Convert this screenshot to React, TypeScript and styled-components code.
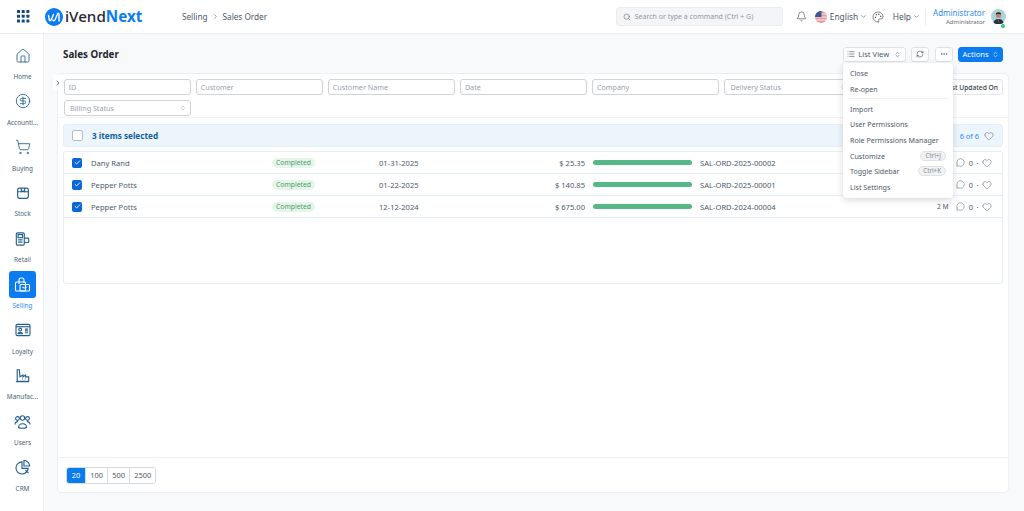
import React from "react";
import styled, { createGlobalStyle } from "styled-components";
import { Bell, ChevronDown, ChevronRight, ChevronsUpDown, Check, Heart, Home, List, MessageCircle, MoreHorizontal, RefreshCw, Search, ShoppingCart, CircleDollarSign, Palette } from "lucide-react";

const Global = createGlobalStyle`
  html, body { margin: 0; padding: 0; background: #f8f9fb; }
  body { font-family: "Noto Sans", "Open Sans", sans-serif; color: #4c5a67; overflow: hidden; }
  #root { width: 1024px; height: 511px; }
  * { box-sizing: border-box; }
`;
const Page = styled.div`width:1024px;height:511px;display:flex;flex-direction:column;position:relative;overflow:hidden;`;
const TopBar = styled.header`height:34px;flex:none;background:#fff;border-bottom:1px solid #e9edf1;display:flex;align-items:center;padding:0 18px 0 17px;`;
const BrandBlock = styled.div`display:flex;align-items:center;gap:15px;width:165px;`;
const Wordmark = styled.div`display:flex;align-items:center;gap:2px;font:500 15.2px "Noto Sans",sans-serif;color:#1f272e;line-height:1;`;
const Blue = styled.span`color:#0b7cf0;font-weight:700;`;
const Crumbs = styled.div`display:flex;align-items:center;gap:4px;font-size:8.2px;color:#4c5a67;white-space:nowrap;`;
const Spacer = styled.div`flex:1;`;
const SearchBox = styled.div`width:167px;height:19px;background:#f4f5f6;border:1px solid #e9edf1;border-radius:3px;display:flex;align-items:center;gap:4px;padding:0 6px;font-size:7px;color:#8d99a6;margin-right:13px;white-space:nowrap;`;
const NavTools = styled.div`display:flex;align-items:center;font-size:8.4px;color:#4c5a67;`;
const ToolGap = styled.div<{ $w: number }>`width:${p => p.$w}px;`;
const Flag = styled.svg`width:12px;height:12px;border-radius:50%;display:block;margin-right:3px;`;
const UserBlock = styled.div`border-left:1px solid #e9edf1;height:16px;margin-left:5px;padding-left:7px;display:flex;align-items:center;gap:6px;`;
const UserText = styled.div`display:flex;flex-direction:column;align-items:flex-end;line-height:1;`;
const UserName = styled.div`font-size:8px;color:#2f8cf0;`;
const UserRole = styled.div`font-size:6px;color:#5f6b76;margin-top:2px;`;
const Avatar = styled.div`position:relative;width:15px;height:15px;`;
const Online = styled.div`position:absolute;right:1px;bottom:-4px;width:4px;height:4px;background:#2ecc71;border-radius:50%;`;
const Body = styled.div`flex:1;display:flex;min-height:0;`;
const Sidebar = styled.nav`width:44px;flex:none;background:#fff;border-right:1px solid #eef0f3;padding:8px 0 0 2px;display:flex;flex-direction:column;`;
const SideItem = styled.div`height:45.75px;display:flex;flex-direction:column;align-items:center;color:#2f5f8a;`;
const IconTile = styled.div<{ $active?: boolean }>`width:27px;height:27px;border-radius:3px;display:flex;align-items:center;justify-content:center;background:${p => p.$active ? "#0b7cf0" : "transparent"};color:${p => p.$active ? "#fff" : "#24608f"};`;
const SideLabel = styled.div<{ $active?: boolean }>`font-size:6.4px;line-height:8px;margin-top:4px;color:${p => p.$active ? "#2f8cf0" : "#4a5f73"};white-space:nowrap;`;
const Main = styled.main`flex:1;padding:0 15px 18px 13px;display:flex;flex-direction:column;min-width:0;`;
const PageHead = styled.div`height:39px;flex:none;display:flex;align-items:center;padding:1px 6px 0 6px;gap:5.5px;`;
const Title = styled.h1`margin:0;font-size:9.8px;font-weight:700;color:#1f272e;flex:1;`;
const HeadButton = styled.div<{ $w: number; $primary?: boolean }>`width:${p => p.$w}px;height:15px;border-radius:3px;display:flex;align-items:center;justify-content:center;gap:3px;font-size:7.6px;white-space:nowrap;background:${p => p.$primary ? "#0b7cf0" : "#fff"};color:${p => p.$primary ? "#fff" : "#4c5a67"};border:1px solid ${p => p.$primary ? "#0b7cf0" : "#dfe3e8"};`;
const Card = styled.section`flex:1;position:relative;background:#fff;border:1px solid #eceff3;border-radius:5px;display:flex;flex-direction:column;min-height:0;`;
const CollapseTab = styled.div`position:absolute;left:-5px;top:1px;width:9px;height:15px;background:#fff;display:flex;align-items:center;justify-content:center;color:#333c44;`;
const FilterArea = styled.div`display:flex;justify-content:space-between;padding:5px 5px 2px 5.6px;border-bottom:1px solid #f0f2f4;height:44px;flex:none;`;
const FilterGrid = styled.div`width:795px;display:flex;flex-wrap:wrap;gap:5px 5.1px;align-content:flex-start;`;
const Field = styled.div<{ $select?: boolean }>`width:127px;height:16px;border:1px solid #cfd3d7;border-radius:3px;background:#fff;font-size:7.2px;color:#98a2ad;display:flex;align-items:center;justify-content:space-between;padding:0 4px 0 ${p => p.$select ? 5.5 : 4}px;white-space:nowrap;`;
const SortButton = styled.div`width:147px;height:16px;border:1px solid #e2e6e9;border-radius:3px;font-size:6.7px;font-weight:500;color:#333c44;display:flex;align-items:center;justify-content:flex-end;padding-right:4px;`;
const Content = styled.div`flex:1;padding:6px 5px 0 5px;min-height:0;`;
const SelectBar = styled.div`height:23px;background:#ecf4fc;border:1px solid #e6f0fa;border-radius:3px;display:flex;align-items:center;padding:0 8px;font-size:8.2px;`;
const SelectedText = styled.div`flex:1;font-weight:700;color:#105f9f;margin-left:9px;`;
const Count = styled.div`color:#2f8cf0;font-size:7.4px;margin-right:5px;`;
const EmptyBox = styled.div`width:11px;height:11px;border:1px solid #b6bcc3;border-radius:2px;background:#fff;`;
const CheckBox = styled.div`width:10px;height:10px;border-radius:2px;background:#0b66d8;display:flex;align-items:center;justify-content:center;color:#fff;`;
const Rows = styled.div`height:133px;margin-top:4px;border:1px solid #e4eef9;border-radius:3px;background:#fff;`;
const Row = styled.div`height:22px;padding:0 0 0 8px;border-bottom:1px solid #e4eef9;display:grid;grid-template-columns:19px 181px 107px 104px 217px 1fr auto;align-items:center;font-size:7.6px;color:#4c5a67;white-space:nowrap;`;
const Status = styled.div`justify-self:start;height:10px;padding:0 4px;border-radius:5px;background:#e5f5ea;color:#4f9b6c;font-size:6.8px;line-height:10px;`;
const Amount = styled.div`text-align:right;width:102px;`;
const Progress = styled.div`width:99px;height:5px;border-radius:3px;background:#56b886;margin-left:8px;`;
const OrderCell = styled.div`display:flex;align-items:center;`;
const RowEnd = styled.div`display:flex;align-items:center;gap:3.5px;padding-right:10px;font-size:7.4px;`;
const Age = styled.span`font-size:6.8px;margin-right:4px;`;
const Footer = styled.div`height:35px;flex:none;border-top:1px solid #eceff3;display:flex;align-items:center;padding:0 8px;`;
const PageGroup = styled.div`display:flex;height:17px;border:1px solid #d8dcdf;border-radius:3px;overflow:hidden;`;
const PageBtn = styled.div<{ $on?: boolean }>`min-width:18px;padding:0 4.2px;font-size:7.4px;display:flex;align-items:center;justify-content:center;background:${p => p.$on ? "#0b7cf0" : "#fff"};color:${p => p.$on ? "#fff" : "#4c5a67"};border-left:${p => p.$on ? "0" : "1px solid #d8dcdf"};`;
const Menu = styled.div`position:absolute;left:843px;top:63px;width:110px;height:135px;background:#fff;border-radius:4px;box-shadow:0 2px 7px rgba(25,39,52,.18);padding:2px 5px;font-size:7.1px;color:#4c5a67;z-index:3;`;
const MenuItem = styled.div`height:15.7px;display:flex;align-items:center;justify-content:space-between;padding:0 2px;white-space:nowrap;`;
const MenuRule = styled.div`height:1.5px;background:#eef0f2;margin:1.3px 0 1.5px;`;
const Kbd = styled.span`height:10px;padding:0 4px;border-radius:5px;border:1px solid #dfe2e5;background:#f1f2f4;font-size:6.2px;line-height:8px;color:#7b8793;`;

const Apps = () => (<svg width="13" height="13" viewBox="0 0 13 13" fill="#15487e">{[0,1,2].flatMap(r=>[0,1,2].map(c=><rect key={`${r}${c}`} x={c*4.7} y={r*4.7} width="3" height="3" rx=".5"/>))}</svg>);
const Logo = () => (<svg width="18" height="18" viewBox="0 0 18 18"><circle cx="9" cy="9" r="9" fill="#0b7cf0"/><path d="M3.5 7.5c.3 2 .5 3.5 1 5 .8.4 1.5-.2 2-1.500l2-4.500M8 12c.2 1 1.500 1 2 0l2.500-6c.4-1 1.500-1 1.500.5V13" fill="none" stroke="#fff" strokeWidth="1.400" strokeLinecap="round" strokeLinejoin="round"/></svg>);
const Retail = () => (<svg width="15" height="16" viewBox="0 0 17 17" fill="none" stroke="currentColor" strokeWidth="1.300"><rect x="1.500" y="1.500" width="9" height="14" rx="1.300"/><rect x="3.500" y="3.500" width="5" height="3.500"/><path d="M3.500 9.500h5M3.500 12h5M10.500 7.500h4a1 1 0 0 1 1 1v3a1 1 0 0 1-1 1h-4"/></svg>);
const Selling = () => (<svg width="17" height="17" viewBox="0 0 17 17" fill="none" stroke="currentColor" strokeWidth="1.100"><path d="M5 8V4a2 2 0 0 1 2-2h1a2 2 0 0 1 2 2v3"/><rect x="1.500" y="6" width="10" height="9" rx="1"/><rect x="6" y="8.500" width="9.500" height="6.500" rx="1"/><path d="M8.500 11c1 1.400 3 1.400 4 0"/></svg>);
const Box = () => (<svg width="14" height="14" viewBox="0 0 17 17" fill="none" stroke="currentColor" strokeWidth="1.400"><rect x="2" y="2.500" width="13" height="12.500" rx="2.500"/><path d="M2 7h13M6.500 2.500V7l2-1 2 1V2.500"/></svg>);
const Loyalty = () => (<svg width="16" height="14" viewBox="0 0 17 15" fill="none" stroke="currentColor" strokeWidth="1.200"><rect x="1" y="1.500" width="15" height="12" rx="1.500"/><path d="M1 4h15"/><circle cx="5.500" cy="7" r="1.500"/><path d="M3 11.500c.3-2 4.700-2 5 0zM10.500 6.500h3.500M10.500 8.500h3.500M10.500 10.500h3.500"/></svg>);
const Factory = () => (<svg width="15" height="15" viewBox="0 0 17 17" fill="none" stroke="currentColor" strokeWidth="1.300"><path d="M2.500 15V2h2.500l.5 8 3.500-2v2l3-2v2h3.500v5zM1 15.500h15"/><path d="M8 12.500h1M11 12.500h1"/></svg>);
const Crm = () => (<svg width="16" height="16" viewBox="0 0 17 17" fill="none" stroke="currentColor" strokeWidth="1.200"><path d="M7.500 3a6.500 6.500 0 1 0 6.500 7H7.500z"/><path d="M9.500 1.500a6 6 0 0 1 6 6h-6z"/><path d="M11 12l3.500 3"/></svg>);
const Team = () => (<svg width="17" height="14" viewBox="0 0 17 14" fill="none" stroke="currentColor" strokeWidth="1.100"><circle cx="3.500" cy="3.500" r="1.900"/><circle cx="8.500" cy="3" r="2.200"/><circle cx="13.500" cy="3.500" r="1.900"/><path d="M1 9.500c0-2 1.500-3 3-2.800M16 9.500c0-2-1.500-3-3-2.800M4.500 12.500c0-5 8-5 8 0-1.500 1-6.500 1-8 0z"/></svg>);
const Portrait = () => (<svg width="15" height="15" viewBox="0 0 15 15"><circle cx="7.500" cy="7.500" r="7.500" fill="#a9d3d8"/><path d="M2.500 13.500c.7-3 3-3.600 5-3.600s4.300.6 5 3.600a7.500 7.500 0 0 1-10 0z" fill="#1d3448"/><path d="M7 10h1l.4 3.500h-1.800z" fill="#b22b3a"/><circle cx="7.500" cy="6.200" r="2.600" fill="#b9866a"/><path d="M4.800 5.500c0-3 5.400-3 5.400 0-1.500-1-3.900-1-5.400 0z" fill="#1d1a18"/></svg>);
const UsFlag = () => (<Flag viewBox="0 0 12 12"><rect width="12" height="12" fill="#e79aa0"/><path d="M0 3h12M0 6h12M0 9h12" stroke="#f7e8e9"/><rect width="6.500" height="6" fill="#3a5a96"/></Flag>);

const navItems: [string, React.ReactNode, boolean?][] = [
  ["Home", <Home size={16} strokeWidth={1.3}/>],
  ["Accounti...", <CircleDollarSign size={16} strokeWidth={1.3}/>],
  ["Buying", <ShoppingCart size={16} strokeWidth={1.3}/>],
  ["Stock", <Box/>],
  ["Retail", <Retail/>],
  ["Selling", <Selling/>, true],
  ["Loyalty", <Loyalty/>],
  ["Manufac...", <Factory/>],
  ["Users", <Team/>],
  ["CRM", <Crm/>],
];
const rows = [
  { name: "Dany Rand", date: "01-31-2025", amt: "$ 25.35", id: "SAL-ORD-2025-00002", age: "" },
  { name: "Pepper Potts", date: "01-22-2025", amt: "$ 140.85", id: "SAL-ORD-2025-00001", age: "" },
  { name: "Pepper Potts", date: "12-12-2024", amt: "$ 675.00", id: "SAL-ORD-2024-00004", age: "2 M" },
];
const filters = ["ID", "Customer", "Customer Name", "Date", "Company"];

export default function App() {
  return (
    <Page>
      <Global />
      <TopBar>
        <BrandBlock>
          <Apps />
          <Wordmark><Logo /><span>iVend<Blue>Next</Blue></span></Wordmark>
        </BrandBlock>
        <Crumbs><span>Selling</span><ChevronRight size={7} /><span>Sales Order</span></Crumbs>
        <Spacer />
        <SearchBox><Search size={8} color="#6b7680" /><span>Search or type a command (Ctrl + G)</span></SearchBox>
        <NavTools>
          <Bell size={11} color="#333c44" strokeWidth={1.3} />
          <ToolGap $w={8} />
          <UsFlag /><span>English</span><ChevronDown size={7} style={{ marginLeft: 2 }} />
          <ToolGap $w={4.5} />
          <Palette size={12} color="#333c44" strokeWidth={1.2} />
          <ToolGap $w={9} />
          <span>Help</span><ChevronDown size={7} style={{ marginLeft: 2 }} />
          <UserBlock>
            <UserText><UserName>Administrator</UserName><UserRole>Administrator</UserRole></UserText>
            <Avatar><Portrait /><Online /></Avatar>
          </UserBlock>
        </NavTools>
      </TopBar>
      <Body>
        <Sidebar>
          {navItems.map(([label, icon, active]) => (
            <SideItem key={label}>
              <IconTile $active={active}>{icon}</IconTile>
              <SideLabel $active={active}>{label}</SideLabel>
            </SideItem>
          ))}
        </Sidebar>
        <Main>
          <PageHead>
            <Title>Sales Order</Title>
            <HeadButton $w={62.5}><List size={8} /><span>List View</span><ChevronsUpDown size={7} style={{ marginLeft: 2 }} /></HeadButton>
            <HeadButton $w={18}><RefreshCw size={8} /></HeadButton>
            <HeadButton $w={18}><MoreHorizontal size={8} /></HeadButton>
            <HeadButton $w={45} $primary><span>Actions</span><ChevronsUpDown size={7} /></HeadButton>
          </PageHead>
          <Card>
            <CollapseTab><ChevronRight size={8} strokeWidth={2} /></CollapseTab>
            <FilterArea>
              <FilterGrid>
                {filters.map(f => <Field key={f}>{f}</Field>)}
                <Field $select>Delivery Status<ChevronsUpDown size={6} /></Field>
                <Field $select>Billing Status<ChevronsUpDown size={6} /></Field>
              </FilterGrid>
              <SortButton>Last Updated On</SortButton>
            </FilterArea>
            <Content>
              <SelectBar>
                <EmptyBox />
                <SelectedText>3 items selected</SelectedText>
                <Count>6 of 6</Count>
                <Heart size={10} strokeWidth={1.2} />
              </SelectBar>
              <Rows>
                {rows.map((r, i) => (
                  <Row key={i}>
                    <CheckBox><Check size={7} strokeWidth={3} /></CheckBox>
                    <span>{r.name}</span>
                    <Status>Completed</Status>
                    <span>{r.date}</span>
                    <OrderCell><Amount>{r.amt}</Amount><Progress /></OrderCell>
                    <span>{r.id}</span>
                    <RowEnd>{r.age && <Age>{r.age}</Age>}<MessageCircle size={9} strokeWidth={1.3} /><span>0</span><span>·</span><Heart size={10} strokeWidth={1.2} /></RowEnd>
                  </Row>
                ))}
              </Rows>
            </Content>
            <Footer>
              <PageGroup>
                <PageBtn $on>20</PageBtn><PageBtn>100</PageBtn><PageBtn>500</PageBtn><PageBtn>2500</PageBtn>
              </PageGroup>
            </Footer>
          </Card>
        </Main>
      </Body>
      <Menu>
        <MenuItem>Close</MenuItem>
        <MenuItem>Re-open</MenuItem>
        <MenuRule />
        <MenuItem>Import</MenuItem>
        <MenuItem>User Permissions</MenuItem>
        <MenuItem>Role Permissions Manager</MenuItem>
        <MenuItem>Customize<Kbd>Ctrl+J</Kbd></MenuItem>
        <MenuItem>Toggle Sidebar<Kbd>Ctrl+K</Kbd></MenuItem>
        <MenuItem>List Settings</MenuItem>
      </Menu>
    </Page>
  );
}
